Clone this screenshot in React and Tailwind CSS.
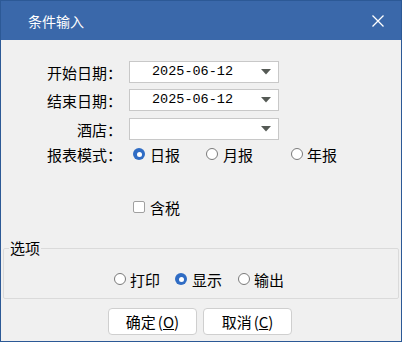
import React from 'react';

const font = { fontFamily: '"Noto Sans CJK SC", "Noto Sans", sans-serif' };

const Radio = ({ checked }) =>
  checked ? (
    <span className="w-[12px] h-[12px] rounded-full bg-[#2f6cc4] flex items-center justify-center shrink-0">
      <span className="block w-[5px] h-[5px] rounded-full bg-white" />
    </span>
  ) : (
    <span className="block w-[12px] h-[12px] rounded-full border border-[#7a7a7a] bg-white shrink-0" />
  );

const Caret = () => (
  <svg width="10" height="6" viewBox="0 0 10 6" className="shrink-0">
    <path d="M0 0 L10 0 L5 5.5 Z" fill="#555a55" />
  </svg>
);

const Combo = ({ value }) => (
  <div className="w-[150px] h-[22px] border border-[#c8c8c8] bg-white flex items-center pr-[7px]">
    <span className="flex-1 text-left text-[13.5px] text-black pl-[22px]" style={{ fontFamily: '"Liberation Mono", monospace' }}>
      {value}
    </span>
    <Caret />
  </div>
);

const Row = ({ label, children, className }) => (
  <div className={`flex items-center ${className}`}>
    <div className="w-[121px] text-right text-[15px] leading-none text-black">{label}</div>
    <div className="ml-[7px] flex items-center">{children}</div>
  </div>
);

const Opt = ({ checked, label, className }) => (
  <div className={`flex items-center ${className || ''}`}>
    <Radio checked={checked} />
    <span className="ml-[4px]">{label}</span>
  </div>
);

export default function App() {
  return (
    <div className="w-[402px] h-[342px] border border-[#2c5996] bg-[#f0f0f0] flex flex-col" style={font}>
      {/* title bar */}
      <div className="h-[39px] bg-[#3a68aa] flex items-center pl-[27px] pr-[17px] shrink-0">
        <span className="text-white text-[14px] flex-1 leading-none">条件输入</span>
        <svg width="12" height="12" viewBox="0 0 12 12">
          <path d="M0.5 0.5 L11.5 11.5 M11.5 0.5 L0.5 11.5" stroke="#fff" strokeWidth="1.3" />
        </svg>
      </div>

      {/* form */}
      <Row label="开始日期：" className="mt-[21px]">
        <Combo value="2025-06-12" />
      </Row>
      <Row label="结束日期：" className="mt-[6px]">
        <Combo value="2025-06-12" />
      </Row>
      <Row label="酒店：" className="mt-[7px]">
        <Combo value="" />
      </Row>
      <Row label="报表模式：" className="mt-[5px] h-[18px]">
        <div className="flex items-center ml-[4px] text-[15px] leading-none text-black">
          <Opt checked label="日报" className="[&>span:last-child]:ml-[5px]" />
          <Opt label="月报" className="ml-[26px] [&>span:last-child]:ml-[5px]" />
          <Opt label="年报" className="ml-[38px]" />
        </div>
      </Row>
      <div className="flex items-center mt-[36px] ml-[132px] h-[16px] text-[15px] leading-none text-black">
        <span className="block w-[12px] h-[12px] border border-[#a0a0a0] bg-white rounded-[2px]" />
        <span className="ml-[5px]">含税</span>
      </div>

      {/* options group */}
      <fieldset className="mx-[2px] mt-[23px] h-[61px] border border-[#dadada] rounded-[2px]">
        <legend className="ml-[5px] px-[1px] text-[15px] leading-[20px] text-black">选项</legend>
        <div className="flex items-center mt-[13px] ml-[110px] h-[16px] text-[15px] leading-none text-black">
          <Opt label="打印" />
          <Opt checked label="显示" className="ml-[15px] [&>span:last-child]:ml-[5px]" />
          <Opt label="输出" className="ml-[16px]" />
        </div>
      </fieldset>

      {/* buttons */}
      <div className="flex gap-[6px] mt-[9px] ml-[107px]">
        <button className="w-[89px] h-[27px] bg-white border border-[#cfcfcf] rounded-[4px] text-[15px] leading-none text-black">
          确定<span className="ml-[2px]">(<span className="underline">O</span>)</span>
        </button>
        <button className="w-[89px] h-[27px] bg-white border border-[#cfcfcf] rounded-[4px] text-[15px] leading-none text-black">
          取消<span className="ml-[2px]">(<span className="underline">C</span>)</span>
        </button>
      </div>
    </div>
  );
}
